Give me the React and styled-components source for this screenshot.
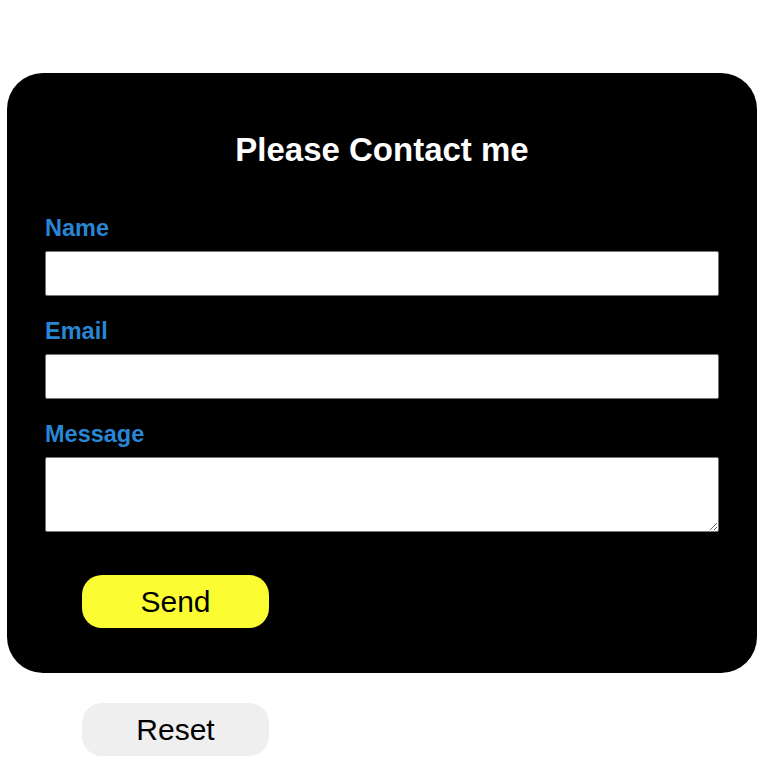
import React from 'react';
import styled, { createGlobalStyle } from 'styled-components';

const GlobalStyle = createGlobalStyle`
  body {
    margin: 0;
    background: #fff;
    font-family: "Liberation Sans", Arial, sans-serif;
  }
`;

const Page = styled.div`
  padding: 73px 0 10px 7px;
`;

const Card = styled.form`
  width: 750px;
  box-sizing: border-box;
  background: #000;
  border-radius: 36px;
  padding: 58px 38px 45px;
`;

const Title = styled.h2`
  margin: 0 0 47px;
  color: #fff;
  font-size: 33px;
  line-height: 37px;
  font-weight: bold;
  text-align: center;
`;

const Field = styled.div`
  display: flex;
  flex-direction: column;
  margin-bottom: 22px;
`;

const Label = styled.label`
  color: #2886d4;
  font-size: 23.5px;
  font-weight: bold;
  line-height: 26px;
  margin-bottom: 10px;
`;

const Input = styled.input`
  box-sizing: border-box;
  width: 100%;
  height: 45px;
  margin: 0;
  border: 1px solid #767676;
  border-radius: 2px;
  background: #fff;
  font-family: inherit;
  font-size: 16px;
`;

const TextArea = styled.textarea`
  box-sizing: border-box;
  width: 100%;
  height: 75px;
  margin: 0;
  border: 1px solid #767676;
  border-radius: 2px;
  background: #fff;
  font-family: inherit;
  font-size: 16px;
  display: block;
`;

const Button = styled.button`
  display: block;
  width: 187px;
  height: 53px;
  margin-left: ${props => props.$offset}px;
  border: none;
  border-radius: 20px;
  background: ${props => (props.$primary ? '#fcfc33' : '#efefef')};
  color: #000;
  font-family: "Liberation Sans", Arial, sans-serif;
  font-size: 30px;
  cursor: pointer;
`;

const Actions = styled.div`
  padding-top: 21px;
`;

const Below = styled.div`
  padding-top: 30px;
`;

const App = () => {
  return (
    <Page>
      <GlobalStyle />
      <Card onSubmit={e => e.preventDefault()}>
        <Title>Please Contact me</Title>
        <Field>
          <Label htmlFor="name">Name</Label>
          <Input type="text" id="name" name="name" />
        </Field>
        <Field>
          <Label htmlFor="email">Email</Label>
          <Input type="email" id="email" name="email" />
        </Field>
        <Field>
          <Label htmlFor="message">Message</Label>
          <TextArea id="message" name="message" />
        </Field>
        <Actions>
          <Button $primary $offset={37} type="submit">Send</Button>
        </Actions>
      </Card>
      <Below>
        <Button $offset={75} type="reset">Reset</Button>
      </Below>
    </Page>
  );
};

export default App;
